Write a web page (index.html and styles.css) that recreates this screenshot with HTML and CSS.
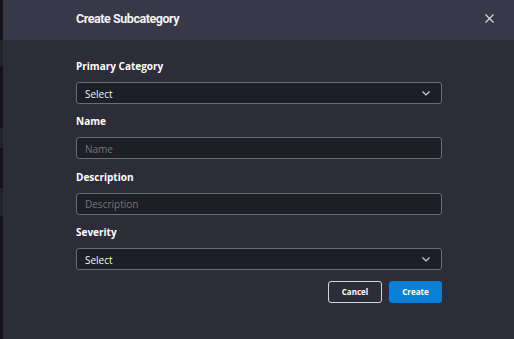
FILE: index.html
```html
<!DOCTYPE html>
<html>
<head>
<title>Create Subcategory</title>
<link rel="stylesheet" href="styles.css">
</head>
<body>
<div class="backdrop">
  <span class="peek peek-a"></span>
  <span class="peek peek-b"></span>
  <span class="peek peek-c"></span>
</div>
<div class="modal">
  <div class="modal-header">
    <h1 class="modal-title">Create Subcategory</h1>
    <button class="close-btn" aria-label="Close">
      <svg width="9" height="9" viewBox="0 0 9 9"><path d="M0.5 0.5 L8.5 8.5 M8.5 0.5 L0.5 8.5" stroke="#d8d8de" stroke-width="1.2" fill="none"/></svg>
    </button>
  </div>
  <form class="modal-body">
    <label class="field-label">Primary Category</label>
    <div class="select-box">
      <span>Select</span>
      <svg class="chevron" width="8" height="5" viewBox="0 0 8 5"><path d="M0.5 0.5 L4 4 L7.5 0.5" stroke="#d0d0d6" stroke-width="1.2" fill="none"/></svg>
    </div>

    <label class="field-label">Name</label>
    <input class="text-input" type="text" placeholder="Name">

    <label class="field-label">Description</label>
    <input class="text-input" type="text" placeholder="Description">

    <label class="field-label">Severity</label>
    <div class="select-box">
      <span>Select</span>
      <svg class="chevron" width="8" height="5" viewBox="0 0 8 5"><path d="M0.5 0.5 L4 4 L7.5 0.5" stroke="#d0d0d6" stroke-width="1.2" fill="none"/></svg>
    </div>

    <div class="actions">
      <button type="button" class="btn btn-cancel">Cancel</button>
      <button type="button" class="btn btn-create">Create</button>
    </div>
  </form>
</div>
</body>
</html>
```

FILE: styles.css
```css
html, body {
  height: 100%;
}

body {
  margin: 0;
  display: flex;
  background-color: #16161b;
  font-family: "Open Sans", sans-serif;
  overflow: hidden;
}

.backdrop {
  width: 3px;
  display: flex;
  flex-direction: column;
  background-color: #141418;
}

.peek {
  display: block;
  background-color: #22232b;
}

.peek-a {
  margin-top: 40px;
  height: 26px;
}

.peek-b {
  margin-top: 62px;
  height: 20px;
}

.peek-c {
  margin-top: 40px;
  height: 28px;
}

.modal {
  flex: 1;
  display: flex;
  flex-direction: column;
  background-color: #2d2d3a;
}

.modal-header {
  box-sizing: border-box;
  height: 40px;
  display: flex;
  align-items: center;
  justify-content: space-between;
  padding: 0 20px 3px 73px;
  background-color: #393848;
}

.modal-title {
  margin: 0;
  font-family: Roboto, sans-serif;
  font-size: 12.5px;
  font-weight: 700;
  color: #f2f2f5;
  letter-spacing: -0.45px;
}

.close-btn {
  background: none;
  border: 0;
  padding: 0;
  width: 9px;
  height: 9px;
  display: flex;
  cursor: pointer;
}

.modal-body {
  display: flex;
  flex-direction: column;
  padding: 19px 72px 0 73px;
}

.field-label {
  font-size: 10px;
  font-weight: 700;
  line-height: 14px;
  color: #ffffff;
  margin-bottom: 9px;
}

.select-box,
.text-input {
  box-sizing: border-box;
  height: 22px;
  margin: 0 0 10.4px;
  border: 1px solid #6c6c73;
  border-radius: 3px;
  background-color: #1e1e27;
  font-family: "Open Sans", sans-serif;
  font-size: 10px;
}

.select-box {
  display: flex;
  align-items: center;
  justify-content: space-between;
  padding: 1px 11px 0 8px;
  color: #f4f4f6;
}

.text-input {
  padding: 1px 8px 0;
  color: #f4f4f6;
  outline: none;
}

.text-input::placeholder {
  color: #74747c;
}

.actions {
  display: flex;
  justify-content: flex-end;
  gap: 7px;
}

.btn {
  height: 22px;
  border-radius: 3px;
  font-family: "Open Sans", sans-serif;
  font-size: 8px;
  font-weight: 700;
  color: #ffffff;
  padding: 0;
  cursor: pointer;
}

.btn-cancel {
  width: 54px;
  border: 1px solid #d6d6da;
  background-color: transparent;
}

.btn-create {
  width: 53px;
  border: 1px solid #0a7fd6;
  background-color: #0a7fd6;
}
```
